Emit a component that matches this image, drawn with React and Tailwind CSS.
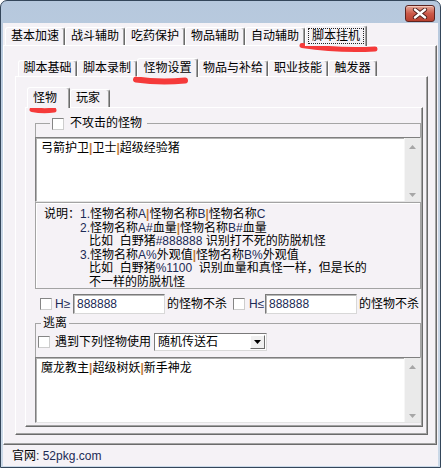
import React from "react";

const topTabs = [
  { label: "基本加速", w: "w-[60px]" },
  { label: "战斗辅助", w: "w-[60px]" },
  { label: "吃药保护", w: "w-[60px]" },
  { label: "物品辅助", w: "w-[60px]" },
  { label: "自动辅助", w: "w-[60px]" },
  { label: "脚本挂机", w: "w-[62px]", active: true, focus: true },
];

const subTabs = [
  { label: "脚本基础", w: "w-[59px]" },
  { label: "脚本录制", w: "w-[60px]" },
  { label: "怪物设置", w: "w-[61px]", active: true },
  { label: "物品与补给", w: "w-[70px]" },
  { label: "职业技能", w: "w-[60px]" },
  { label: "触发器", w: "w-[49px]" },
];

const panel =
  "border border-t-white border-l-white border-r-[#6b6b6b] border-b-[#6b6b6b] shadow-[inset_-1px_-1px_0_#a3a3a3]";

function Tab({ label, w, active, focus, h, activeH, left }) {
  return (
    <div
      className={`${w} ${
        active ? `relative z-10 -mb-px bg-[#f5f2f6] ${activeH}` : h
      } flex items-center ${
        left ? "justify-start pl-[5px]" : "justify-center"
      } rounded-t-[3px] border border-b-0 border-t-white border-l-white border-r-[#6b6b6b] shadow-[inset_-1px_0_0_#a3a3a3]`}
    >
      {focus ? (
        <span className="border border-dotted border-[#222] px-[3px] h-[16px] leading-[14px]">
          {label}
        </span>
      ) : (
        <span className="leading-[13px]">{label}</span>
      )}
    </div>
  );
}

function Pipe() {
  return <span className="font-bold text-[#c47a34]">|</span>;
}

function L({ children }) {
  return <span className="text-[#1b2a55]">{children}</span>;
}

function Check({ className = "" }) {
  return (
    <span
      className={`block w-[12px] h-[12px] shrink-0 bg-white border border-[#858585] border-r-[#cdcdcd] border-b-[#cdcdcd] ${className}`}
    />
  );
}

function Arrow({ up }) {
  return (
    <svg width="7" height="4" viewBox="0 0 7 4">
      <path d={up ? "M0 4 L3.5 0 L7 4 Z" : "M0 0 L7 0 L3.5 4 Z"} fill="#a6a6a6" />
    </svg>
  );
}

function Memo({ children, className }) {
  return (
    <div
      className={`${className} -mx-px flex bg-white border border-t-[#7f7f7f] border-l-[#7f7f7f] border-r-[#e4e4e4] border-b-[#e4e4e4] shadow-[inset_1px_1px_0_#b3b3b3]`}
    >
      <div className="flex-1 pl-[5px] pt-[4px] leading-[13px] whitespace-nowrap">{children}</div>
      <div className="w-[16px] bg-[#eaeaea] border-l border-[#f6f6f6] flex flex-col items-center justify-between pt-[7px] pb-[4px]">
        <Arrow up />
        <Arrow />
      </div>
    </div>
  );
}

function Input({ value }) {
  return (
    <div className="w-[92px] h-[20px] shrink-0 flex items-center pl-[3px] bg-white border border-t-[#7a7a7a] border-l-[#7a7a7a] border-r-[#d8d8d8] border-b-[#d8d8d8] shadow-[inset_1px_1px_0_#b8b8b8]">
      <L>{value}</L>
    </div>
  );
}

export default function App() {
  return (
    <div className="relative w-[441px] h-[468px] overflow-hidden bg-white font-['Liberation_Sans','Noto_Sans_CJK_SC',sans-serif] text-[12px] text-black">
      <div className="w-full h-full flex flex-col rounded-t-[7px] border border-[#34465a] bg-gradient-to-b from-[#b6c8dd] via-[#c7d5e5] to-[#cbd9e8]">
        {/* title bar */}
        <div className="h-[22px] flex justify-end">
          <div className="mt-[4px] mr-[5px] w-[30px] h-[17px] rounded-[3px] border border-[#5c2420] bg-gradient-to-b from-[#e3a595] via-[#cc5a4a] to-[#b8402f] flex items-center justify-center shadow-[inset_0_1px_0_#f2c6ba]">
            <svg width="16" height="11" viewBox="0 0 16 11">
              <path d="M3 1.5 L13 9.5 M13 1.5 L3 9.5" stroke="#4a1c18" strokeWidth="4.2" strokeLinecap="round" />
              <path d="M3 1.5 L13 9.5 M13 1.5 L3 9.5" stroke="#ffffff" strokeWidth="2.4" strokeLinecap="round" />
            </svg>
          </div>
        </div>

        {/* body */}
        <div className="flex-1 ml-[2px] mr-[2px] mb-[1px] bg-[#f5f2f6] flex flex-col">
          <div className="h-[22px] flex items-end pl-[2px]">
            {topTabs.map((t) => (
              <Tab key={t.label} {...t} h="h-[18px]" activeH="h-[21px]" />
            ))}
          </div>

          <div className={`w-[434px] h-[400px] ${panel} flex flex-col`}>
            <div className="mt-[12px] h-[18px] flex items-end pl-[14px]">
              {subTabs.map((t) => (
                <Tab key={t.label} {...t} h="h-[16px]" activeH="h-[19px]" />
              ))}
            </div>

            <div className={`ml-[11px] w-[413px] h-[359px] ${panel} flex flex-col`}>
              <div className="mt-[10px] h-[20px] flex items-end pl-[11px]">
                <Tab label="怪物" w="w-[43px]" active activeH="h-[21px]" left />
                <Tab label="玩家" w="w-[40px]" h="h-[18px]" left />
              </div>

              <div className={`ml-[9px] w-[398px] h-[320px] ${panel} pl-[9px]`}>
                <fieldset className="mt-[9px] w-[386px] border border-[#a5a5a5]">
                  <legend className="ml-[14px] px-[2px]">
                    <div className="h-[13px] flex items-center">
                      <Check />
                      <span className="ml-[6px] mr-[3px] leading-[13px]">不攻击的怪物</span>
                    </div>
                  </legend>
                  <Memo className="mt-[7px] h-[65px]">
                    弓箭护卫<Pipe />卫士<Pipe />超级经验猪
                  </Memo>
                  <div className="-mx-px -mb-px h-[87px] border border-[#a3a3a3] shadow-[inset_1px_1px_0_#ffffff] pl-[8px] pt-[5px] flex leading-[13.5px] whitespace-nowrap">
                    <div className="w-[36px] shrink-0">说明：</div>
                    <div>
                      <div>
                        <L>1.</L>怪物名称<L>A</L><Pipe />怪物名称<L>B</L><Pipe />怪物名称<L>C</L>
                      </div>
                      <div>
                        <L>2.</L>怪物名称<L>A#</L>血量<Pipe />怪物名称<L>B#</L>血量
                      </div>
                      <div className="pl-[9px] whitespace-pre">
                        比如  白野猪<L>#888888</L> 识别打不死的防脱机怪
                      </div>
                      <div>
                        <L>3.</L>怪物名称<L>A%</L>外观值<Pipe />怪物名称<L>B%</L>外观值
                      </div>
                      <div className="pl-[9px] whitespace-pre">
                        比如  白野猪<L>%1100</L>  识别血量和真怪一样，但是长的
                      </div>
                      <div className="pl-[9px]">不一样的防脱机怪</div>
                    </div>
                  </div>
                </fieldset>

                <div className="mt-[5px] h-[20px] flex items-center whitespace-nowrap">
                  <Check className="ml-[5px]" />
                  <span className="ml-[3px] w-[18px] shrink-0">
                    <L>H≥</L>
                  </span>
                  <Input value="888888" />
                  <span className="ml-[2px]">的怪物不杀</span>
                  <Check className="ml-[6px]" />
                  <span className="ml-[4px] w-[16px] shrink-0">
                    <L>H≤</L>
                  </span>
                  <Input value="888888" />
                  <span className="ml-[2px]">的怪物不杀</span>
                </div>

                <fieldset className="mt-[3px] w-[386px] border border-[#a5a5a5]">
                  <legend className="ml-[5px] px-[2px] h-[13px] leading-[13px]">逃离</legend>
                  <div className="mt-[3px] h-[18px] flex items-center pl-[2px]">
                    <Check />
                    <span className="ml-[5px]">遇到下列怪物使用</span>
                    <div className="ml-[3px] w-[113px] h-[18px] flex items-center bg-white border border-t-[#7a7a7a] border-l-[#7a7a7a] border-r-[#d8d8d8] border-b-[#d8d8d8] pl-[3px]">
                      <span className="leading-[13px]">随机传送石</span>
                      <div className="ml-auto mr-[1px] w-[15px] h-[14px] bg-[#f0f0f0] border border-t-white border-l-white border-r-[#6b6b6b] border-b-[#6b6b6b] flex items-center justify-center">
                        <svg width="7" height="4" viewBox="0 0 7 4">
                          <path d="M0 0 L7 0 L3.5 4 Z" fill="#000" />
                        </svg>
                      </div>
                    </div>
                  </div>
                  <Memo className="mt-[6px] h-[66px] -mb-px">
                    魔龙教主<Pipe />超级树妖<Pipe />新手神龙
                  </Memo>
                </fieldset>
              </div>
            </div>
          </div>

          {/* status bar */}
          <div className="flex-1 pl-[9px] pt-[5px] leading-[13px]">
            官网<L>: 52pkg.com</L>
          </div>
        </div>
      </div>

      {/* red marker annotations */}
      <svg className="absolute inset-0 pointer-events-none" width="441" height="468" viewBox="0 0 441 468">
        <path d="M302 45.5 Q338 51 375 49" stroke="#f53a3a" strokeWidth="5" fill="none" strokeLinecap="round" />
        <path d="M136 79.5 Q160 83 185 80.5" stroke="#f53a3a" strokeWidth="6" fill="none" strokeLinecap="round" />
        <path d="M32 109.5 Q43 111.5 54 110" stroke="#f53a3a" strokeWidth="5" fill="none" strokeLinecap="round" />
      </svg>
    </div>
  );
}
